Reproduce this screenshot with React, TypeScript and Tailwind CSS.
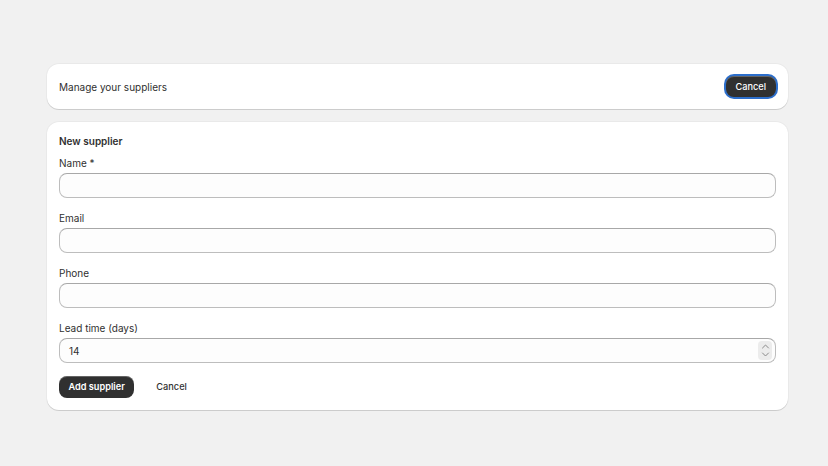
export default function App() {
    return (
        <div className="min-h-[466px] bg-[#f1f1f1] pt-[64px] pl-[47px] pr-[40px] text-[10px] text-[#303030]" style={{ fontFamily: "Inter, 'Noto Sans', sans-serif" }}>
            <div className="flex flex-col gap-[13px]">
                <Header />
                <SupplierForm />
            </div>
        </div>
    )
}

function Header() {
    return (
        <div className="flex h-[45px] items-center justify-between rounded-xl bg-white pl-3 pr-3 shadow-[0_1px_0_rgba(0,0,0,0.12),0_0_0_1px_rgba(0,0,0,0.03)]">
            <span className="leading-4">Manage your suppliers</span>
            <button className="flex h-[21px] items-center rounded-lg bg-[#303030] px-[10px] text-[9.2px] font-medium text-white ring-2 ring-[#2c6ecb] shadow-[inset_0_1px_0_rgba(255,255,255,0.25)]">Cancel</button>
        </div>
    )
}

function Field({ label, value }: { label: string; value?: string }) {
    return (
        <div className="flex flex-col">
            <label className="mb-[2px] leading-4">{label}</label>
            <div className="flex h-[25px] items-center rounded-lg border border-[#bdbdbd] border-t-[#a8a8a8] bg-[#fdfdfd] pl-[9px] pr-[2px]">
                <span className="flex-1 leading-4">{value}</span>
            </div>
        </div>
    )
}

function NumberField({ label, value }: { label: string; value: string }) {
    return (
        <div className="flex flex-col">
            <label className="mb-[2px] leading-4">{label}</label>
            <div className="flex h-[25px] items-center rounded-lg border border-[#bdbdbd] border-t-[#a8a8a8] bg-[#fdfdfd] pl-[9px] pr-[3px]">
                <span className="flex-1 leading-4">{value}</span>
                <div className="flex h-[19px] w-[14px] flex-col items-center justify-center gap-[1px] rounded-[4px] bg-[#ececec] text-[#8a8a8a]">
                    <svg width="9" height="7" viewBox="0 0 9 7" fill="none" stroke="currentColor" strokeWidth="1" strokeLinecap="round" strokeLinejoin="round">
                        <path d="M1.5 5 4.5 2l3 3" />
                    </svg>
                    <svg width="9" height="7" viewBox="0 0 9 7" fill="none" stroke="currentColor" strokeWidth="1" strokeLinecap="round" strokeLinejoin="round">
                        <path d="M1.5 2 4.5 5l3-3" />
                    </svg>
                </div>
            </div>
        </div>
    )
}

function SupplierForm() {
    return (
        <form className="flex flex-col rounded-xl bg-white px-3 pt-[11px] pb-3 shadow-[0_1px_0_rgba(0,0,0,0.12),0_0_0_1px_rgba(0,0,0,0.03)]">
            <h2 className="mb-[6px] font-semibold leading-4">New supplier</h2>
            <div className="flex flex-col gap-3">
                <Field label="Name *" />
                <Field label="Email" />
                <Field label="Phone" />
                <NumberField label="Lead time (days)" value="14" />
            </div>
            <div className="mt-[13px] flex items-center gap-[22px]">
                <button type="button" className="flex h-[22px] items-center rounded-lg bg-[#303030] px-[9.5px] text-[9.2px] font-semibold text-white shadow-[inset_0_1px_0_rgba(255,255,255,0.25)]">Add supplier</button>
                <button type="button" className="text-[9.2px] font-medium">Cancel</button>
            </div>
        </form>
    )
}
